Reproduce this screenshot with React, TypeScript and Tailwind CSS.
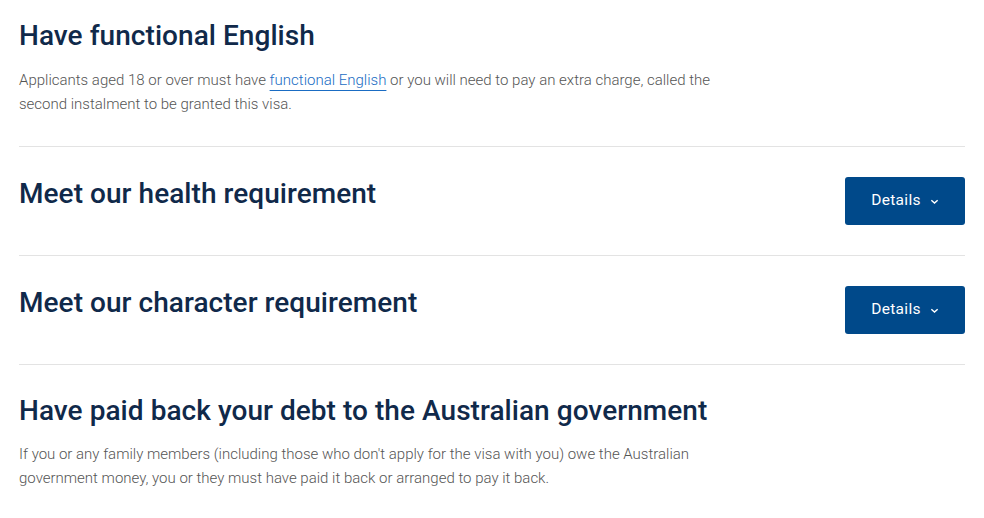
import React from "react";

function DetailsButton() {
  return (
    <button className="flex h-[48px] w-[120px] shrink-0 items-center justify-center gap-[9px] rounded-[3px] bg-[#00498a] text-[15.5px] tracking-[0.3px] text-white">
      Details
      <svg viewBox="0 0 10 10" className="h-[9px] w-[9px]" fill="none" stroke="currentColor" strokeWidth="1.6">
        <path d="M1.5 3.5 L5 6.8 L8.5 3.5" />
      </svg>
    </button>
  );
}

export default function App() {
  const h2 = "text-[28px] font-medium leading-[34px] tracking-[0.05px] text-[#10294a]";
  const body = "max-w-[720px] text-[15px] font-light leading-[24px] text-[#555]";

  return (
    <div className="min-h-screen bg-white px-[19px] font-['Roboto',sans-serif]">
      <section className="pt-[19px] pb-[30px]">
        <h2 className={h2}>Have functional English</h2>
        <p className={`${body} mt-[15px]`}>
          Applicants aged 18 or over must have{" "}
          <a href="#" className="text-[#1a6cc3] underline decoration-[#1a6cc3] decoration-1 underline-offset-[5px]">
            functional English
          </a>{" "}
          or you will need to pay an extra charge, called the second instalment to be granted this visa.
        </p>
      </section>

      <section className="flex items-start justify-between border-t border-[#e3e3e3] py-[30px]">
        <h2 className={h2}>Meet our health requirement</h2>
        <DetailsButton />
      </section>

      <section className="flex items-start justify-between border-t border-[#e3e3e3] py-[30px]">
        <h2 className={h2}>Meet our character requirement</h2>
        <DetailsButton />
      </section>

      <section className="border-t border-[#e3e3e3] pt-[29px] pb-[30px]">
        <h2 className={h2}>Have paid back your debt to the Australian government</h2>
        <p className={`${body} mt-[14px]`}>
          If you or any family members (including those who don't apply for the visa with you) owe the Australian
          government money, you or they must have paid it back or arranged to pay it back.
        </p>
      </section>
    </div>
  );
}
